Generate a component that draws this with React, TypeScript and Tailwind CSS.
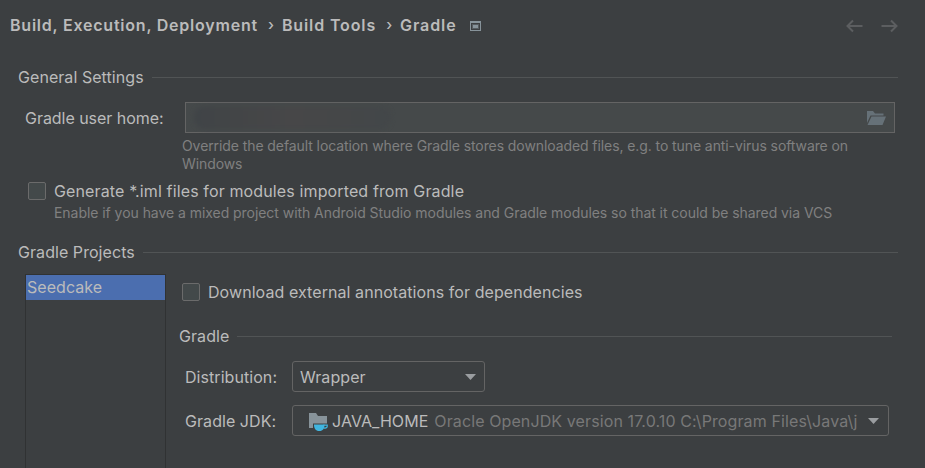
import type { ReactNode } from "react";

function Section({ title, className }: { title: string; className: string }) {
  return (
    <div className={`flex h-5 items-center gap-2 ${className}`}>
      <h2 className="whitespace-nowrap">{title}</h2>
      <div className="h-px flex-1 bg-[#515455]" />
    </div>
  );
}

function Checkbox({ label, className }: { label: string; className: string }) {
  return (
    <label className={`flex h-[18px] items-center gap-2 ${className}`}>
      <span className="h-[18px] w-[18px] shrink-0 rounded-[2px] border border-[#6b6b6b] bg-[#43494a]" />
      <span className="whitespace-nowrap">{label}</span>
    </label>
  );
}

function Caret() {
  return (
    <svg width="11" height="6" viewBox="0 0 11 6" className="shrink-0" fill="#9a9da0">
      <path d="M0 0h11L5.5 6z" />
    </svg>
  );
}

function Select({ children, className }: { children: ReactNode; className: string }) {
  return (
    <div className={`flex h-[31px] items-center rounded-[3px] border border-[#646464] ${className}`}>
      {children}
      <Caret />
    </div>
  );
}

function Arrow({ flip }: { flip?: boolean }) {
  return (
    <svg width="18" height="14" viewBox="0 0 18 14" fill="none" stroke="#5c5e60" strokeWidth="2" className={flip ? "rotate-180" : ""}>
      <path d="M17.500 7H2.500M8 1.500L2.500 7l5.500 5.500" />
    </svg>
  );
}

function Separator() {
  return <span className="w-[24px] pl-[3px] text-center text-[15px] font-medium">›</span>;
}

export default function App() {
  return (
    <div className="flex h-[468px] w-[925px] flex-col overflow-hidden bg-[#3c3f41] font-['Inter',sans-serif] text-[16px] leading-5 tracking-[0.06px] text-[#bbbbbb]">
      <header className="flex h-[50px] shrink-0 items-center pl-[10px] pr-[26px] font-semibold tracking-[0.78px]">
        <span>Build, Execution, Deployment</span>
        <Separator />
        <span className="tracking-[0.88px]">Build Tools</span>
        <Separator />
        <span className="tracking-[0.9px]">Gradle</span>
        <svg width="11" height="10" viewBox="0 0 11 10" className="ml-[13px] mt-[2px]" fill="#87939a">
          <path fillRule="evenodd" d="M0 0h11v10H0zM1 2h9v7H1z" />
          <path d="M2 3h7v5H2z" opacity=".35" />
          <path d="M3 4h5v3H3z" />
        </svg>
        <div className="ml-auto mt-[2px] flex gap-[18px]">
          <Arrow />
          <Arrow flip />
        </div>
      </header>

      <Section title="General Settings" className="ml-[18px] mr-[27px] mt-[17px] shrink-0" />

      <div className="mt-[15px] flex h-[31px] shrink-0 items-center pl-[25px] pr-[30px]">
        <span className="w-[160px] tracking-[-0.04px]">Gradle user home:</span>
        <div className="flex h-[31px] flex-1 items-center justify-between border border-[#646464] bg-[#45494a] pl-2 pr-2">
          <div className="h-[23px] w-[197px] rounded-xl bg-linear-to-r from-[#404447] via-[#474748] to-[#434749] blur-[2px]" />
          <svg width="19" height="14" viewBox="0 0 19 14" fill="#667178">
            <path d="M0 0h6l2 2.500h8.500V4.500H3.500L0 12z" />
            <path d="M4.500 5.500H19L15.500 14H.5z" />
          </svg>
        </div>
      </div>

      <p className="ml-[182px] mt-1 shrink-0 whitespace-nowrap text-[14px] leading-[18px] tracking-[-0.087px] text-[#808080]">
        Override the default location where Gradle stores downloaded files, e.g. to tune anti-virus software on
        <br />
        Windows
      </p>

      <div className="mt-[9px] shrink-0 pl-7">
        <Checkbox label="Generate *.iml files for modules imported from Gradle" className="tracking-[0.13px]" />
        <p className="ml-[26px] mt-1 whitespace-nowrap text-[14px] leading-[18px] tracking-[-0.05px] text-[#808080]">
          Enable if you have a mixed project with Android Studio modules and Gradle modules so that it could be shared via VCS
        </p>
      </div>

      <Section title="Gradle Projects" className="ml-[18px] mr-[27px] mt-5 shrink-0" />

      <div className="mt-3 flex flex-1 pl-[25px]">
        <div className="w-[141px] border border-b-0 border-[#303233]">
          <div className="h-[25px] bg-[#4b6eaf] pl-px leading-[25px]">Seedcake</div>
        </div>
        <div className="flex-1 pl-[13px] pt-[9px]">
          <div className="pl-[3px]">
            <Checkbox label="Download external annotations for dependencies" className="tracking-[0.07px]" />
          </div>
          <Section title="Gradle" className="mr-[33px] mt-[25px]" />
          <div className="mt-[15px] grid grid-cols-[107px_1fr] items-center gap-y-[13px] pl-[6px] pr-9">
            <span>Distribution:</span>
            <Select className="w-[193px] justify-between pl-[7px] pr-[8px]">
              <span>Wrapper</span>
            </Select>
            <span>Gradle JDK:</span>
            <Select className="w-[597px] pl-4 pr-[9px]">
              <svg width="19" height="18" viewBox="0 0 19 18" className="mt-[2px] shrink-0">
                <path d="M0 0h7l2 3h9v7.500H4V15H0z" fill="#87939a" />
                <path d="M5 11.500h10.500c0 4-1.500 6.500-5.200 6.500S5 15.500 5 11.500z" fill="#40b6e0" />
                <path d="M14.500 12.200h3.700v1.300c0 1-1.200 1.700-3.700 1.700" fill="none" stroke="#40b6e0" strokeWidth="1.200" />
              </svg>
              <span className="ml-1 whitespace-nowrap">JAVA_HOME</span>
              <span className="ml-[6px] flex-1 whitespace-nowrap tracking-[0.11px] text-[#787878]">
                Oracle OpenJDK version 17.0.10 C:\Program Files\Java\j
              </span>
            </Select>
          </div>
        </div>
      </div>
    </div>
  );
}
